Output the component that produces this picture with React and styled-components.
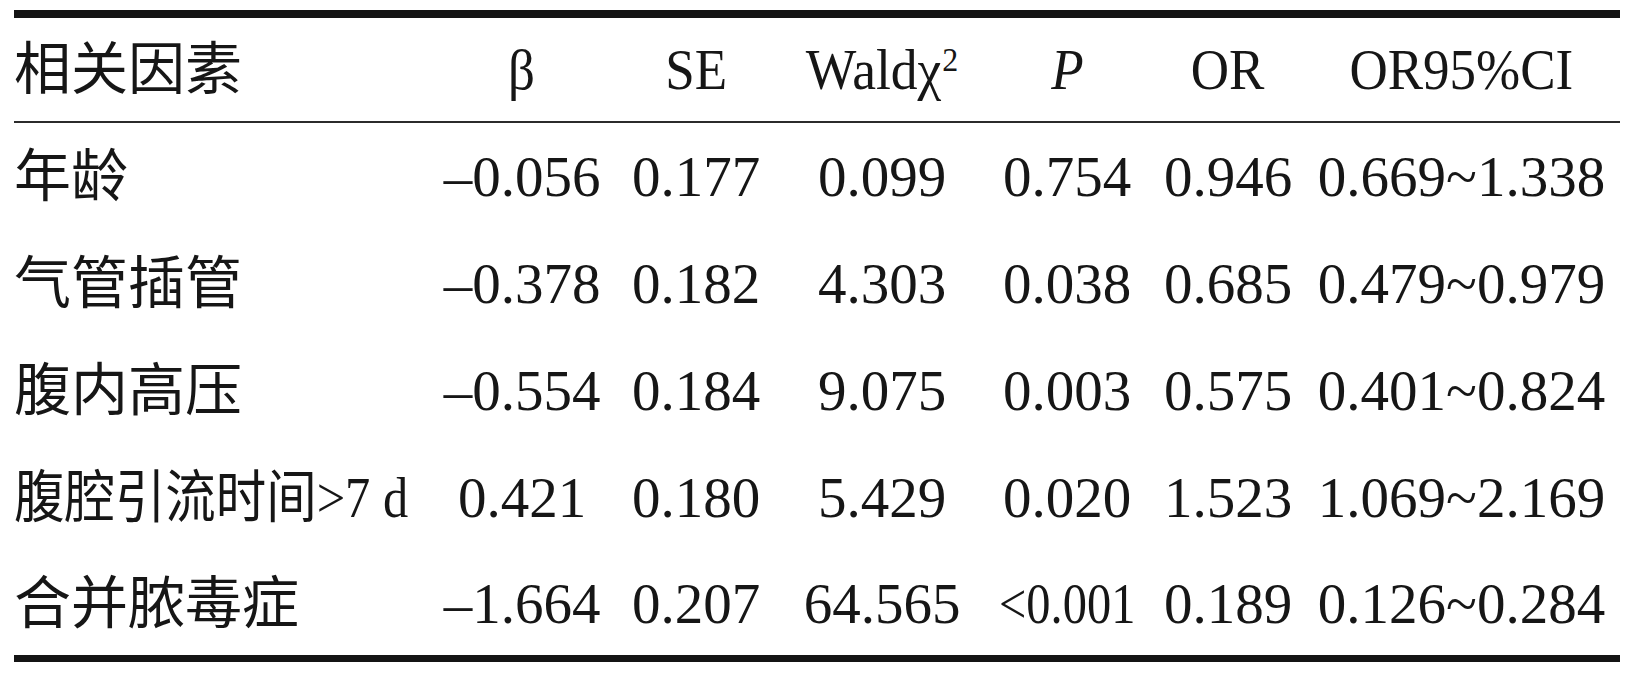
import React from 'react'
import styled, { createGlobalStyle } from 'styled-components'

const GlobalStyle = createGlobalStyle`
  html, body {
    margin: 0;
    padding: 0;
    background: #fff;
  }
  body {
    font-family: "Liberation Serif", "Noto Sans CJK SC", serif;
    color: #161616;
  }
`

const cols = '421px 174px 174px 198px 172px 150px 317px'

const header = ['β', 'SE', 'wald', 'P', 'OR', 'OR95%CI']

const rows = [
  { name: '年龄', vals: ['–0.056', '0.177', '0.099', '0.754', '0.946', '0.669~1.338'] },
  { name: '气管插管', vals: ['–0.378', '0.182', '4.303', '0.038', '0.685', '0.479~0.979'] },
  { name: '腹内高压', vals: ['–0.554', '0.184', '9.075', '0.003', '0.575', '0.401~0.824'] },
  { name: '腹腔引流时间>7 d', squeeze: true, vals: ['0.421', '0.180', '5.429', '0.020', '1.523', '1.069~2.169'] },
  { name: '合并脓毒症', vals: ['–1.664', '0.207', '64.565', '<0.001', '0.189', '0.126~0.284'] },
]

const Page = styled.div`
  padding: 10px 14px 0 14px;
  width: 1606px;
`

const Table = styled.div`
  border-top: 8px solid #141414;
  border-bottom: 7px solid #141414;
`

const Row = styled.div`
  display: grid;
  grid-template-columns: ${cols};
  height: ${(p) => p.$h}px;
  align-items: center;
  border-bottom: ${(p) => (p.$rule ? '2px solid #2b2b2b' : 'none')};
`

const Cell = styled.div`
  font-size: 57px;
  line-height: 1;
  white-space: nowrap;
  text-align: ${(p) => (p.$left ? 'left' : 'center')};
  font-style: ${(p) => (p.$italic ? 'italic' : 'normal')};
`

const Squeezed = styled.span`
  display: inline-block;
  transform: scaleX(${(p) => p.$x});
  transform-origin: ${(p) => (p.$left ? 'left center' : 'center center')};
`

const Sup = styled.span`
  font-size: 34px;
  vertical-align: top;
  position: relative;
  top: 2px;
  margin-left: 1px;
`

function HeadText({ label }) {
  if (label === 'wald') {
    return (
      <Squeezed $x={0.94}>
        Waldχ<Sup>2</Sup>
      </Squeezed>
    )
  }
  return <Squeezed $x={0.93}>{label}</Squeezed>
}

export default function App() {
  return (
    <>
      <GlobalStyle />
      <Page>
        <Table>
          <Row $h={103} $rule>
            <Cell $left>相关因素</Cell>
            {header.map((h) => (
              <Cell key={h} $italic={h === 'P'}>
                <HeadText label={h} />
              </Cell>
            ))}
          </Row>
          {rows.map((r, i) => (
            <Row key={r.name} $h={i === rows.length - 1 ? 104 : 107}>
              <Cell $left>
                {r.squeeze ? (
                  <Squeezed $x={0.885} $left>{r.name}</Squeezed>
                ) : (
                  r.name
                )}
              </Cell>
              {r.vals.map((v, j) => (
                <Cell key={j}>
                  {v.startsWith('<') ? <Squeezed $x={0.85}>{v}</Squeezed> : v}
                </Cell>
              ))}
            </Row>
          ))}
        </Table>
      </Page>
    </>
  )
}
